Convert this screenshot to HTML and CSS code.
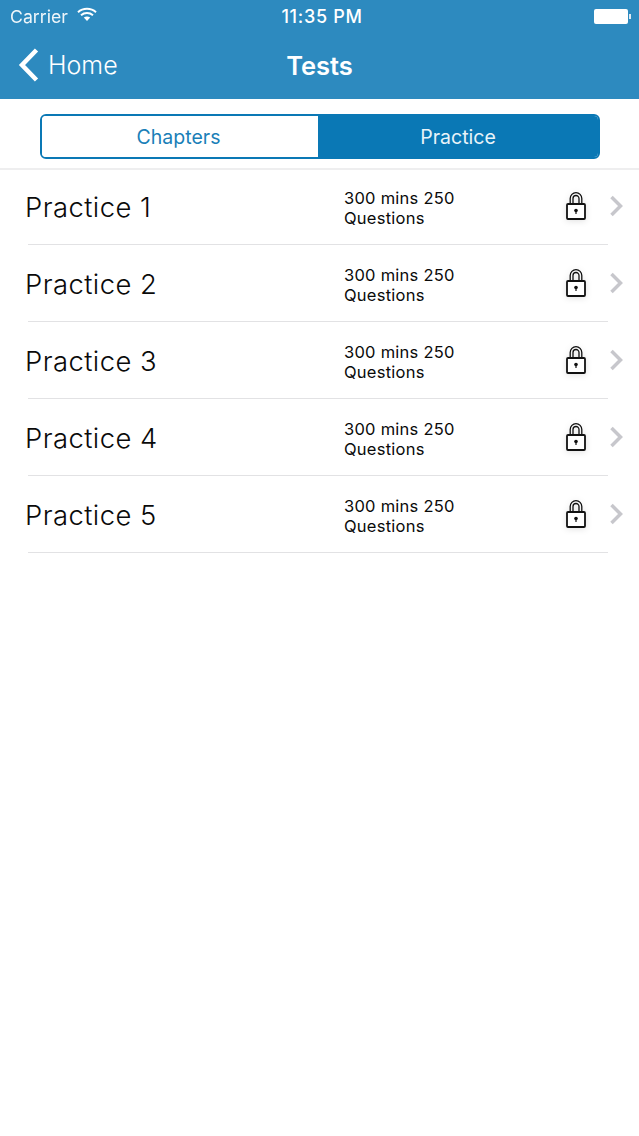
FILE: index.html
```html
<!DOCTYPE html>
<html lang="en">
<head>
<meta charset="utf-8">
<title>Tests</title>
<link rel="stylesheet" href="styles.css">
</head>
<body>
<header class="top">
  <div class="status">
    <div class="status-left">
      <span class="carrier">Carrier</span>
      <svg class="wifi" width="20" height="15" viewBox="0 0 20 15"><path d="M1 5.2C6 .6 14 .6 19 5.2" fill="none" stroke="#fff" stroke-width="2"/><path d="M4 8.2c3.500-3 8.500-3 12 0" fill="none" stroke="#fff" stroke-width="2"/><path d="M6.800 10.600c2-1.500 4.400-1.500 6.400 0L10 14z" fill="#fff"/></svg>
    </div>
    <span class="clock">11:35 PM</span>
    <div class="status-right">
      <span class="battery"></span><span class="battery-tip"></span>
    </div>
  </div>
  <div class="nav">
    <div class="back">
      <svg width="24" height="36" viewBox="0 0 24 36"><path d="M20.500 3 6 18 20.500 33" fill="none" stroke="#fff" stroke-width="4.500"/></svg>
      <span class="back-label">Home</span>
    </div>
    <span class="title">Tests</span>
  </div>
</header>
<div class="tabs">
  <div class="segment">
    <span class="seg seg-off">Chapters</span>
    <span class="seg seg-on">Practice</span>
  </div>
</div>
<ul class="list">
  <li class="row"><span class="name">Practice 1</span><span class="meta">300 mins 250 Questions</span><svg class="lock" width="22" height="30" viewBox="0 0 22 30"><path d="M5.200 14V7.500a5.800 5.800 0 0 1 11.600 0V14M8 14V7.500a3 3 0 0 1 6 0V14" fill="none" stroke="#111" stroke-width="1.300"/><rect x="2" y="13" width="18" height="15" rx="1" fill="#fff" stroke="#111" stroke-width="1.800"/><circle cx="11" cy="19.500" r="1.800" fill="#111"/><path d="M11 19.500V23" stroke="#111" stroke-width="1.200"/></svg><svg class="chev" width="14" height="22" viewBox="0 0 14 22"><path d="M2.500 2 11.500 11l-9 9" fill="none" stroke="#c7c7cc" stroke-width="3.500"/></svg></li>
  <li class="row"><span class="name">Practice 2</span><span class="meta">300 mins 250 Questions</span><svg class="lock" width="22" height="30" viewBox="0 0 22 30"><path d="M5.200 14V7.500a5.800 5.800 0 0 1 11.600 0V14M8 14V7.500a3 3 0 0 1 6 0V14" fill="none" stroke="#111" stroke-width="1.300"/><rect x="2" y="13" width="18" height="15" rx="1" fill="#fff" stroke="#111" stroke-width="1.800"/><circle cx="11" cy="19.500" r="1.800" fill="#111"/><path d="M11 19.500V23" stroke="#111" stroke-width="1.200"/></svg><svg class="chev" width="14" height="22" viewBox="0 0 14 22"><path d="M2.500 2 11.500 11l-9 9" fill="none" stroke="#c7c7cc" stroke-width="3.500"/></svg></li>
  <li class="row"><span class="name">Practice 3</span><span class="meta">300 mins 250 Questions</span><svg class="lock" width="22" height="30" viewBox="0 0 22 30"><path d="M5.200 14V7.500a5.800 5.800 0 0 1 11.600 0V14M8 14V7.500a3 3 0 0 1 6 0V14" fill="none" stroke="#111" stroke-width="1.300"/><rect x="2" y="13" width="18" height="15" rx="1" fill="#fff" stroke="#111" stroke-width="1.800"/><circle cx="11" cy="19.500" r="1.800" fill="#111"/><path d="M11 19.500V23" stroke="#111" stroke-width="1.200"/></svg><svg class="chev" width="14" height="22" viewBox="0 0 14 22"><path d="M2.500 2 11.500 11l-9 9" fill="none" stroke="#c7c7cc" stroke-width="3.500"/></svg></li>
  <li class="row"><span class="name">Practice 4</span><span class="meta">300 mins 250 Questions</span><svg class="lock" width="22" height="30" viewBox="0 0 22 30"><path d="M5.200 14V7.500a5.800 5.800 0 0 1 11.600 0V14M8 14V7.500a3 3 0 0 1 6 0V14" fill="none" stroke="#111" stroke-width="1.300"/><rect x="2" y="13" width="18" height="15" rx="1" fill="#fff" stroke="#111" stroke-width="1.800"/><circle cx="11" cy="19.500" r="1.800" fill="#111"/><path d="M11 19.500V23" stroke="#111" stroke-width="1.200"/></svg><svg class="chev" width="14" height="22" viewBox="0 0 14 22"><path d="M2.500 2 11.500 11l-9 9" fill="none" stroke="#c7c7cc" stroke-width="3.500"/></svg></li>
  <li class="row"><span class="name">Practice 5</span><span class="meta">300 mins 250 Questions</span><svg class="lock" width="22" height="30" viewBox="0 0 22 30"><path d="M5.200 14V7.500a5.800 5.800 0 0 1 11.600 0V14M8 14V7.500a3 3 0 0 1 6 0V14" fill="none" stroke="#111" stroke-width="1.300"/><rect x="2" y="13" width="18" height="15" rx="1" fill="#fff" stroke="#111" stroke-width="1.800"/><circle cx="11" cy="19.500" r="1.800" fill="#111"/><path d="M11 19.500V23" stroke="#111" stroke-width="1.200"/></svg><svg class="chev" width="14" height="22" viewBox="0 0 14 22"><path d="M2.500 2 11.500 11l-9 9" fill="none" stroke="#c7c7cc" stroke-width="3.500"/></svg></li>
</ul>
</body>
</html>
```
FILE: styles.css
```css
* { box-sizing: border-box; }
html, body { margin: 0; padding: 0; }
body {
  width: 639px;
  height: 1136px;
  overflow: hidden;
  background: #fff;
  color: #111;
  font-family: Inter, "Noto Sans", sans-serif;
}
.top {
  height: 99px;
  background: #2d8abf;
  color: #fff;
}
.status {
  height: 32px;
  padding: 0 8px 0 10px;
  display: grid;
  grid-template-columns: 1fr auto 1fr;
  align-items: center;
}
.status-left { display: flex; align-items: center; gap: 9px; }
.carrier { font-size: 17.7px; font-weight: 400; opacity: .92; }
.wifi { margin-top: -3px; }
.clock { margin-left: 3px; font-size: 18px; font-weight: 500; letter-spacing: .7px; }
.status-right { display: flex; align-items: center; justify-content: flex-end; }
.battery { width: 34px; height: 15px; background: #fff; border-radius: 2px; }
.battery-tip { width: 2px; height: 5px; background: #dfeaf3; margin-left: 1px; }
.nav {
  height: 67px;
  position: relative;
  display: flex;
  align-items: center;
  justify-content: center;
}
.back {
  position: absolute;
  left: 16px;
  top: 15px;
  display: flex;
  align-items: center;
  gap: 8px;
}
.back-label { font-size: 25px; font-weight: 350; }
.title { font-size: 25.5px; font-weight: 600; }
.tabs {
  height: 71px;
  margin-bottom: -2px;
  padding: 15px 39px 0 40px;
  background: #fff;
  border-bottom: 2px solid #eeeeef;
}
.segment {
  height: 45px;
  display: flex;
  border: 2px solid #0a78b5;
  border-radius: 6px;
  overflow: hidden;
}
.seg {
  display: flex;
  align-items: center;
  justify-content: center;
  font-size: 19.5px;
  font-weight: 400;
}
.seg-off { width: 276px; padding-right: 3px; background: #fff; color: #1a7fb8; }
.seg-on { flex: 1; background: #0a78b5; color: #e8f3f9; }
.list { list-style: none; margin: 0; padding: 0; position: relative; }
.row {
  height: 77px;
  padding: 1px 15px 0 25px;
  display: flex;
  align-items: center;
  position: relative;
}
.row::after {
  content: "";
  position: absolute;
  left: 28px;
  right: 31px;
  bottom: 0;
  height: 1px;
  background: #e2e2e4;
}
.name { width: 319px; font-size: 27.4px; font-weight: 360; letter-spacing: .45px; color: #0a0a0a; }
.meta { width: 135px; margin-top: 2px; font-size: 16.5px; line-height: 20px; font-weight: 390; letter-spacing: .25px; color: #0a0a0a; }
.lock { margin-left: 86px; margin-top: -3px; filter: drop-shadow(0 1px 3px rgba(0, 0, 0, .12)); }
.chev { margin-left: 22px; margin-top: -3px; }
```
